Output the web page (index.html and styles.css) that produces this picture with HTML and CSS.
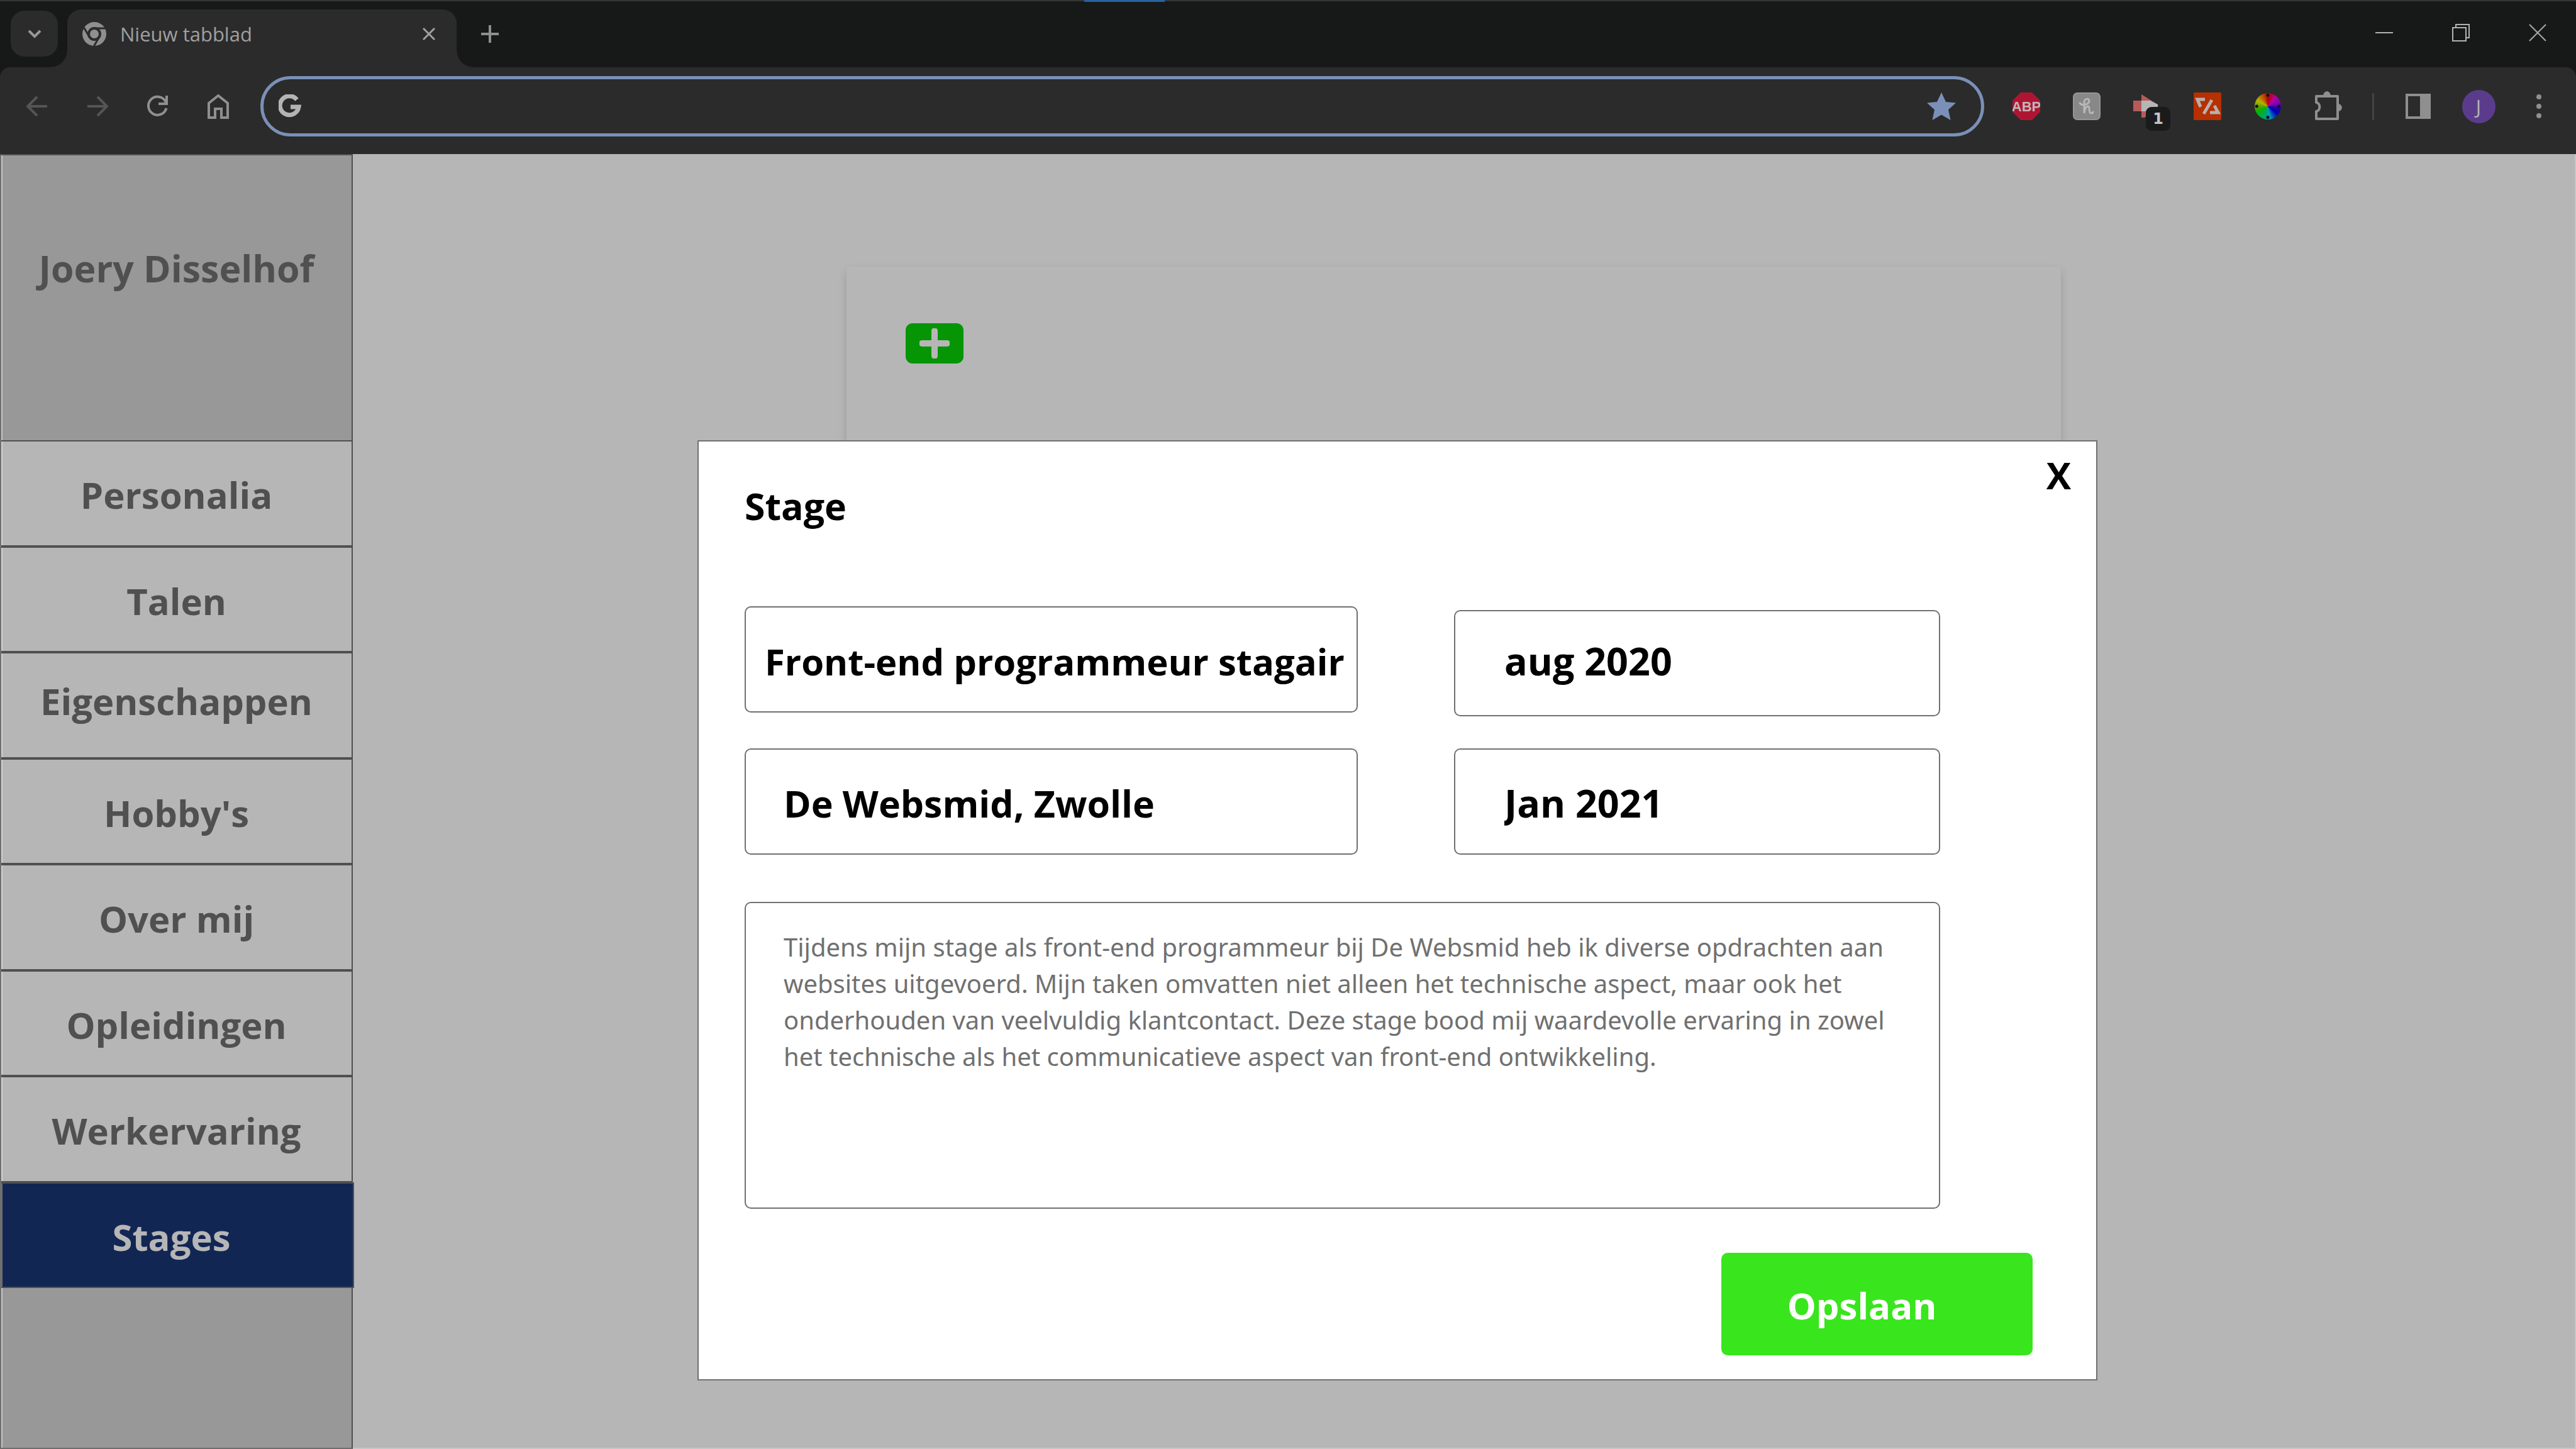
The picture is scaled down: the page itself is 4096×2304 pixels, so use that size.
FILE: index.html
```html
<!DOCTYPE html>
<html lang="nl">
<head>
<meta charset="utf-8">
<title>Stages</title>
<link rel="stylesheet" href="styles.css">
</head>
<body>
<header class="browser">
  <div class="tabstrip">
    <button class="tab-search" aria-label="Tabbladen zoeken">
      <svg width="24" height="16" viewBox="0 0 24 16"><path d="M3 3l9 9 9-9" fill="none" stroke="#989898" stroke-width="4"/></svg>
    </button>
    <div class="tab">
      <svg width="38" height="38" viewBox="0 0 38 38"><circle cx="19" cy="19" r="19" fill="#8f8f8f"/><circle cx="19" cy="19" r="9" fill="none" stroke="#2b2b2b" stroke-width="4"/><path d="M19 10h18M11 23.500L2.500 9M27 23.500L18.500 38" stroke="#2b2b2b" stroke-width="3"/></svg>
      <span class="tab-title">Nieuw tabblad</span>
      <button class="tab-close" aria-label="Tabblad sluiten"><svg width="20" height="20" viewBox="0 0 20 20"><path d="M1 1l18 18M19 1L1 19" stroke="#a0a0a0" stroke-width="3"/></svg></button>
    </div>
    <button class="new-tab" aria-label="Nieuw tabblad openen"><svg width="28" height="28" viewBox="0 0 28 28"><path d="M14 0v28M0 14h28" stroke="#8f8f8f" stroke-width="4"/></svg></button>
    <div class="window-buttons">
      <button aria-label="Minimaliseren"><svg width="28" height="28" viewBox="0 0 28 28"><path d="M0 14h28" stroke="#b2b2b2" stroke-width="2"/></svg></button>
      <button aria-label="Verkleinen"><svg width="28" height="28" viewBox="0 0 28 28"><path d="M1 6h21v21H1zM6 6V1h21v21h-5" fill="none" stroke="#b2b2b2" stroke-width="2"/></svg></button>
      <button aria-label="Sluiten"><svg width="28" height="28" viewBox="0 0 28 28"><path d="M1 1l26 26M27 1L1 27" stroke="#a8a8a8" stroke-width="2"/></svg></button>
    </div>
  </div>
  <div class="toolbar">
    <button class="tool" aria-label="Vorige"><svg width="34" height="34" viewBox="0 0 34 34"><path d="M33 17H3M17 2L2 17l15 15" fill="none" stroke="#555" stroke-width="4"/></svg></button>
    <button class="tool" aria-label="Volgende"><svg width="34" height="34" viewBox="0 0 34 34"><path d="M1 17h30M17 2l15 15-15 15" fill="none" stroke="#555" stroke-width="4"/></svg></button>
    <button class="tool" aria-label="Vernieuwen"><svg width="36" height="36" viewBox="0 0 36 36"><path d="M31.500 21A14.500 14.500 0 1 1 30 10L32 14" fill="none" stroke="#8f8f8f" stroke-width="4"/><path d="M32 1v13H19" fill="none" stroke="#8f8f8f" stroke-width="4"/></svg></button>
    <button class="tool" aria-label="Startpagina"><svg width="34" height="40" viewBox="0 0 34 40"><path d="M2 15L17 3l15 12v23H22V24H12v14H2z" fill="none" stroke="#8f8f8f" stroke-width="4"/></svg></button>
    <label class="omnibox">
      <svg width="36" height="38" viewBox="0 0 36 38"><path d="M29 8.500A15 15 0 1 0 32 20H19" fill="none" stroke="#b4b4b4" stroke-width="7"/></svg>
      <input type="text" aria-label="Adresbalk">
      <svg width="46" height="44" viewBox="0 0 46 44"><path d="M23 0l7 15 16 1.500-12 11L37.500 44 23 35.500 8.500 44 12 27.500 0 16.500 16 15z" fill="#7a90b8"/></svg>
    </label>
    <button class="tool" aria-label="Adblock Plus"><svg width="44" height="44" viewBox="0 0 44 44"><path d="M13 0h18l13 13v18L31 44H13L0 31V13z" fill="#af1532"/><text x="22" y="30" text-anchor="middle" class="abp">ABP</text></svg></button>
    <button class="tool" aria-label="Honey"><svg width="44" height="44" viewBox="0 0 44 44"><rect x="1" y="1" width="42" height="42" rx="6" fill="#888" stroke="#969696" stroke-width="2"/><path d="M11 17c4 5 15 2 15-4 0-4-8-4-8 3v17c1-8 4-11 6-11 4 0 0 11 5 11 2 0 3-1 3-2" fill="none" stroke="#b8b8b8" stroke-width="3" stroke-linecap="round"/></svg></button>
    <button class="tool with-badge" aria-label="Extensie, 1 melding"><svg width="44" height="38" viewBox="0 0 44 38"><path d="M0 10h13V0l27 17-22 20h-5V27H0z" fill="#b65b5b"/><path d="M13 10h14l12 6v11H13z" fill="#b6b6b6"/></svg><span class="badge">1</span></button>
    <button class="tool" aria-label="Codehulp"><svg width="44" height="44" viewBox="0 0 44 44"><rect width="44" height="44" rx="2" fill="#b63000"/><path d="M18 11H6l5 12M29 12L16 34M33 21l6 11H26" fill="none" stroke="#b8b0ae" stroke-width="5"/></svg></button>
    <button class="tool" aria-label="Kleurkiezer"><span class="wheel"></span></button>
    <button class="tool" aria-label="Extensies"><svg width="46" height="48" viewBox="0 0 46 48"><path d="M4 8h34v36H4V32c7-1 7-13 0-14z" fill="none" stroke="#8f8f8f" stroke-width="4" stroke-linejoin="round"/><path d="M15 7c1-9 11-9 12 0zM38 20c9 0 9 12 0 12z" fill="#8f8f8f"/></svg></button>
    <span class="divider"></span>
    <button class="tool" aria-label="Zijpaneel"><svg width="40" height="40" viewBox="0 0 40 40"><path d="M2 2h36v36H2zM25 2h13v36H25z" fill="none" stroke="#8f8f8f" stroke-width="4"/><path d="M25 2h13v36H25z" fill="#8f8f8f"/></svg></button>
    <button class="tool" aria-label="Profiel"><span class="avatar">J</span></button>
    <button class="tool" aria-label="Menu"><svg width="8" height="40" viewBox="0 0 8 40"><g fill="#8f8f8f"><circle cx="4" cy="5" r="4"/><circle cx="4" cy="20" r="4"/><circle cx="4" cy="35" r="4"/></g></svg></button>
  </div>
</header>
<div class="page">
  <aside class="sidebar">
    <div class="owner">Joery Disselhof</div>
    <nav class="menu">
      <a href="#personalia">Personalia</a>
      <a href="#talen">Talen</a>
      <a href="#eigenschappen" class="raised">Eigenschappen</a>
      <a href="#hobbys">Hobby's</a>
      <a href="#over-mij">Over mij</a>
      <a href="#opleidingen">Opleidingen</a>
      <a href="#werkervaring">Werkervaring</a>
      <a href="#stages" class="active">Stages</a>
    </nav>
  </aside>
  <main class="content">
    <section class="card">
      <button class="add" aria-label="Toevoegen"><svg width="48" height="48" viewBox="0 0 48 48"><path d="M24 4v40M4 24h40" stroke="#b6b6b6" stroke-width="10" stroke-linecap="round"/></svg></button>
    </section>
  </main>
</div>
<section class="modal" role="dialog" aria-labelledby="modal-title">
  <div class="modal-head">
    <h1 id="modal-title">Stage</h1>
    <button class="modal-close" aria-label="Sluiten">X</button>
  </div>
  <form class="form">
    <div class="fields">
      <input class="field wide-text" type="text" aria-label="Functie" value="Front-end programmeur stagair">
      <input class="field date low" type="text" aria-label="Begindatum" value="aug 2020">
      <input class="field" type="text" aria-label="Bedrijf" value="De Websmid, Zwolle">
      <input class="field date" type="text" aria-label="Einddatum" value="Jan 2021">
    </div>
    <textarea class="description" aria-label="Omschrijving">Tijdens mijn stage als front-end programmeur bij De Websmid heb ik diverse opdrachten aan
websites uitgevoerd. Mijn taken omvatten niet alleen het technische aspect, maar ook het
onderhouden van veelvuldig klantcontact. Deze stage bood mij waardevolle ervaring in zowel
het technische als het communicatieve aspect van front-end ontwikkeling.</textarea>
    <button class="save" type="button">Opslaan</button>
  </form>
</section>
</body>
</html>
```
FILE: styles.css
```css
* { box-sizing: border-box; }

body {
  margin: 0;
  min-height: 100vh;
  display: flex;
  flex-direction: column;
  position: relative;
  background: #b6b6b6;
  font-family: "Open Sans", "Noto Sans", sans-serif;
}

button, input, textarea {
  margin: 0;
  padding: 0;
  border: 0;
  background: none;
  font-family: inherit;
  outline: none;
}

svg { display: block; flex: none; }

/* Browser window */
.browser {
  background: #171918;
  border-top: 2px solid #353736;
  position: relative;
}

.browser::before {
  content: "";
  position: absolute;
  top: -2px;
  left: 1724px;
  width: 128px;
  height: 3px;
  background: #2a62a0;
}

.tabstrip {
  height: 105px;
  padding: 13px 0 0 17px;
  display: flex;
  align-items: flex-start;
}

.tab-search {
  width: 75px;
  height: 73px;
  margin: 2px 15px 0 0;
  border-radius: 22px;
  background: #2b2b2b;
  display: flex;
  align-items: center;
  justify-content: center;
}

.tab {
  position: relative;
  width: 619px;
  height: 92px;
  padding: 0 34px 14px 24px;
  display: flex;
  align-items: center;
  border-radius: 22px 22px 0 0;
  background: #2b2b2b;
}

.tab::before, .tab::after {
  content: "";
  position: absolute;
  bottom: 0;
  width: 26px;
  height: 26px;
}

.tab::before { left: -26px; background: radial-gradient(circle at 0 0, transparent 25px, #2b2b2b 26px); }
.tab::after { right: -26px; background: radial-gradient(circle at 100% 0, transparent 25px, #2b2b2b 26px); }

.tab-title {
  flex: 1;
  margin-left: 22px;
  font-size: 31px;
  line-height: 40px;
  color: #a0a0a0;
}

.new-tab {
  width: 96px;
  height: 78px;
  margin-left: 5px;
  display: flex;
  align-items: center;
  justify-content: center;
}

.window-buttons { margin-left: auto; display: flex; }

.window-buttons button {
  width: 122px;
  height: 74px;
  display: flex;
  align-items: center;
  justify-content: center;
}

.toolbar {
  height: 138px;
  padding: 0 11px 14px;
  display: flex;
  align-items: center;
  background: #2b2b2b;
  border-radius: 16px 16px 0 0;
}

.tool {
  width: 96px;
  height: 96px;
  flex: none;
  display: flex;
  align-items: center;
  justify-content: center;
}

.omnibox {
  flex: 1;
  height: 96px;
  margin: 0 19px;
  padding: 0 40px 0 24px;
  display: flex;
  align-items: center;
  border: 5px solid #7a90b8;
  border-radius: 48px;
}

.omnibox input { flex: 1; height: 60px; font-size: 31px; color: #b4b4b4; }

.abp { font: bold 22px "Liberation Sans", sans-serif; fill: #c4b4b8; }

.with-badge { position: relative; }

.badge {
  position: absolute;
  left: 46px;
  top: 49px;
  width: 39px;
  height: 38px;
  border-radius: 9px;
  background: #1a1b1b;
  color: #c4c4c4;
  font: bold 24px/38px "DejaVu Sans", sans-serif;
  text-align: center;
}

.wheel {
  width: 42px;
  height: 42px;
  border-radius: 50%;
  background:
    radial-gradient(circle at 50% 8%, #111 2px, transparent 3px),
    radial-gradient(circle at 50% 92%, #111 2px, transparent 3px),
    radial-gradient(circle at 8% 50%, #111 2px, transparent 3px),
    radial-gradient(circle at 92% 50%, #111 2px, transparent 3px),
    conic-gradient(#b60000, #b600a0 40deg, #7000b6 80deg, #1a00a0 100deg, #0000b6 130deg, #00a0b6 170deg, #00a080 190deg, #00b600 240deg, #60a000 270deg, #b6b600 300deg, #b64000 340deg, #b60000);
}

.divider { width: 3px; height: 43px; margin: 0 22px; flex: none; background: #444; }

.avatar {
  width: 53px;
  height: 53px;
  border-radius: 50%;
  background: #5b3c8c;
  color: #b4b4b4;
  font: 31px/53px "Open Sans", sans-serif;
  text-align: center;
}

/* Page */
.page { flex: 1; display: flex; }

.sidebar {
  width: 561px;
  flex: none;
  display: flex;
  flex-direction: column;
  background: #989898;
  border: 2px solid #505050;
  border-left-color: #6f6f6f;
  border-bottom-color: #6e6e6e;
  box-shadow: inset 2px 0 #c4c4c4;
}

.owner {
  height: 453px;
  padding-top: 137px;
  font-size: 59px;
  font-weight: 700;
  line-height: 84px;
  text-align: center;
  color: #505050;
}

.menu { display: grid; grid-auto-rows: 1fr; min-height: 1348px; }

.menu a {
  display: flex;
  align-items: center;
  justify-content: center;
  padding-top: 6px;
  background: #b6b6b6;
  border: 2px solid #505050;
  border-width: 2px 0;
  box-shadow: inset 2px 0 #d0d0d0;
  color: #505050;
  font-size: 58px;
  font-weight: 700;
  line-height: 84px;
  text-decoration: none;
}

.menu .raised { padding: 0 0 12px; }

.menu .active {
  margin-right: -4px;
  padding-right: 18px;
  border-right-width: 2px;
  background: #122654;
  color: #b6b6b6;
  box-shadow: inset 2px 0 #6f6f6f;
}

.content { flex: 1; padding: 179px 817px 0 785px; border: 0 solid #c6c6c6; border-width: 0 2px 2px 0; }

.card {
  height: 700px;
  padding: 90px 94px;
  background: #b6b6b6;
  box-shadow: 0 6px 13px rgba(0, 0, 0, 0.14);
}

.add {
  width: 92px;
  height: 64px;
  border-radius: 11px;
  background: #069504;
  display: flex;
  align-items: center;
  justify-content: center;
}

/* Dialog */
.modal {
  position: absolute;
  top: 700px;
  left: 1109px;
  right: 761px;
  padding-bottom: 38px;
  background: #fff;
  border: 2px solid #707070;
}

.modal-head {
  display: flex;
  justify-content: space-between;
  align-items: flex-start;
  padding: 11px 40px 0 73px;
}

.modal-head h1 {
  margin: 49px 0 0;
  font-size: 59px;
  font-weight: 700;
  line-height: 84px;
  color: #000;
}

.modal-close { font-size: 59px; font-weight: 700; line-height: 84px; color: #000; }

.form {
  padding: 118px 101px 0 73px;
  display: flex;
  flex-direction: column;
}

.fields {
  margin-right: 147px;
  display: grid;
  grid-template-columns: 975fr 773fr;
  grid-template-rows: 175px auto;
  gap: 51px 153px;
}

.field {
  width: 100%;
  height: 169px;
  padding: 4px 0 0 60px;
  border: 2px solid #707070;
  border-radius: 10px;
  background: #fff;
  color: #000;
  font-size: 59px;
  font-weight: 700;
}

.wide-text { padding: 6px 0 0 30px; font-size: 58px; }
.date { padding-left: 78px; font-size: 61px; }
.low { align-self: end; padding: 0 0 8px 78px; }

.description {
  height: 488px;
  margin: 75px 147px 0 0;
  padding: 41px 60px;
  border: 2px solid #707070;
  border-radius: 10px;
  color: #707070;
  font-family: "Noto Sans", "Open Sans", sans-serif;
  font-size: 40px;
  line-height: 58px;
  resize: none;
  overflow: hidden;
}

.save {
  align-self: flex-end;
  width: 495px;
  height: 163px;
  margin-top: 70px;
  padding: 4px 48px 0 0;
  border-radius: 10px;
  background: #39e51d;
  color: #fff;
  font-size: 58px;
  font-weight: 700;
}
```
